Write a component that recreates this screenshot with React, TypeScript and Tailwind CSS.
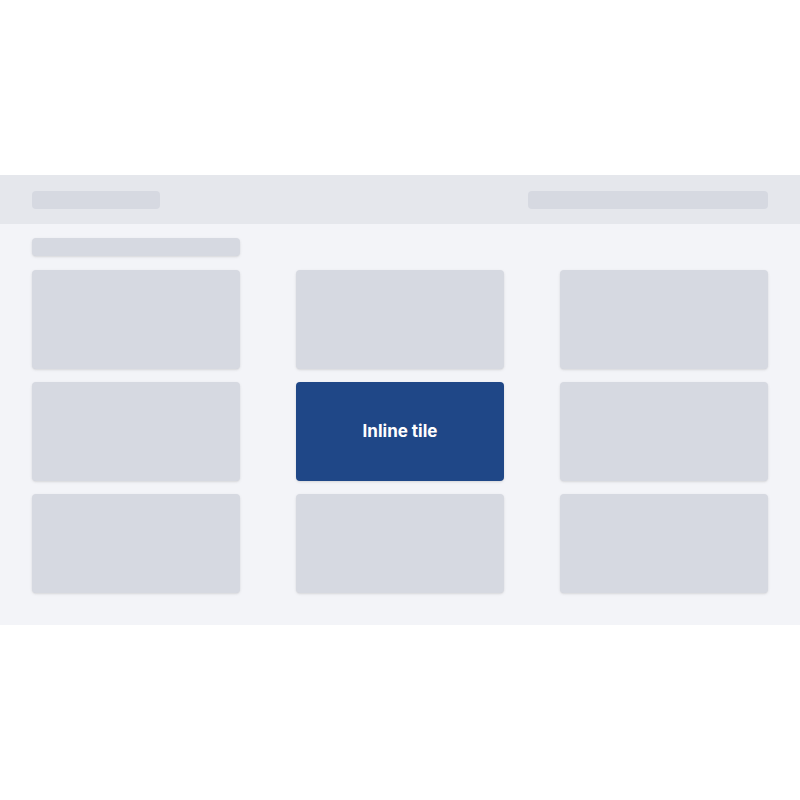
import React from 'react';

const TILES = Array.from({ length: 9 }, (_, i) => i);

export default function App() {
  return (
    <div className="flex h-screen w-full items-center bg-white" style={{ fontFamily: 'Inter, "Noto Sans", sans-serif' }}>
      <div className="w-full bg-[#f3f4f8]">
        {/* Header bar */}
        <div className="flex h-[49px] items-center justify-between bg-[#e5e7ec] px-8">
          <div className="h-[18px] w-[128px] rounded-sm bg-[#d6d9e1]" />
          <div className="h-[18px] w-[240px] rounded-sm bg-[#d6d9e1]" />
        </div>

        {/* Body */}
        <div className="flex flex-col gap-[14px] px-8 pt-[14px] pb-8">
          <div className="h-[18px] w-[208px] rounded-sm bg-[#d6d9e1] shadow-sm" />
          <div className="grid grid-cols-3 gap-x-14 gap-y-[13px]">
            {TILES.map(i =>
              i === 4 ? (
                <div
                  key={i}
                  className="flex h-[99px] items-center justify-center rounded-sm bg-[#1f4787] text-[17px] font-bold text-white shadow-sm"
                >
                  Inline tile
                </div>
              ) : (
                <div key={i} className="h-[99px] rounded-sm bg-[#d6d9e1] shadow-sm" />
              )
            )}
          </div>
        </div>
      </div>
    </div>
  );
}
